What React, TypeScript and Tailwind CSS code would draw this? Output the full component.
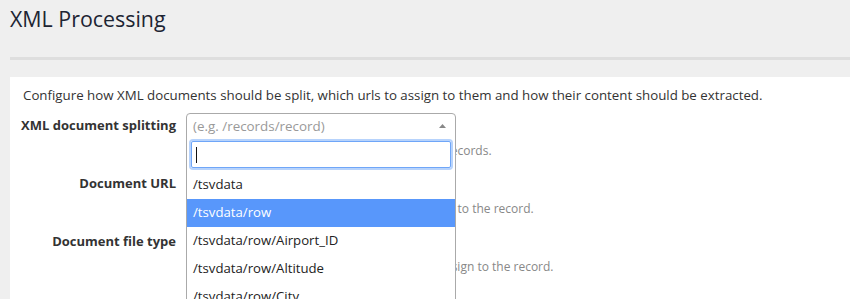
const options = [
  "/tsvdata",
  "/tsvdata/row",
  "/tsvdata/row/Airport_ID",
  "/tsvdata/row/Altitude",
  "/tsvdata/row/City",
  "/tsvdata/row/Country",
];

const rows = [
  {
    label: "Document URL",
    help: "Select the XML element holding the url to assign to the record.",
  },
  {
    label: "Document file type",
    help: "Choose the XML element with the file type to assign to the record.",
  },
];

const SplitSelect = () => {
  return (
    <div className="relative w-[270px]">
      <div className="flex h-[26px] items-center justify-between rounded-t-[4px] border border-[#aaa] bg-white pl-[6px] pr-[9px]">
        <span className="text-[13.4px] text-[#999]">(e.g. /records/record)</span>
        <svg width="7" height="4" viewBox="0 0 7 4">
          <path d="M0 4 L3.5 0 L7 4 Z" fill="#888" />
        </svg>
      </div>
      {/* open dropdown */}
      <div className="absolute left-0 top-[25px] z-10 w-[270px] border-x border-[#aaa] bg-white">
        <div className="px-[4px] pb-[3px] pt-[3px]">
          <div className="flex h-[27px] items-center rounded-[2px] border border-[#6fa6f8] pl-[4px] shadow-[0_0_0_2px_#b7d3fc]">
            <span className="h-[16px] w-px bg-[#111]" />
          </div>
        </div>
        <ul>
          {options.map((o, i) => (
            <li
              key={o}
              className={`flex h-[28px] items-center pl-[6px] text-[13.2px] ${
                i === 1 ? "bg-[#5897fb] text-white" : "text-[#222]"
              }`}
            >
              {o}
            </li>
          ))}
        </ul>
      </div>
    </div>
  );
};

export default function App() {
  return (
    <div
      className="h-[299px] overflow-hidden bg-[#efefef]"
      style={{ fontFamily: '"Open Sans", "Liberation Sans", sans-serif' }}
    >
      <h1 className="px-[10px] pt-[2px] text-[21.4px] leading-[34px] text-[#1d2533]">
        XML Processing
      </h1>
      <div className="ml-[10px] mt-[21px] h-[3px] bg-[#dedede]" />
      <div className="ml-[10px] mt-[17px] bg-white pb-10 pt-[9px]">
        <p className="pl-[13px] text-[13.3px] leading-[18px] text-[#333]">
          Configure how XML documents should be split, which urls to assign to them and how their content should be extracted.
        </p>
        <div className="mt-[9px] grid grid-cols-[166px_1fr] gap-x-[10px]">
          <label className="flex h-[26px] items-center justify-end text-[13px] font-bold text-[#333]">
            XML document splitting
          </label>
          <div>
            <SplitSelect />
            <p className="mt-[3px] text-[12px] leading-[17px] text-[#888]">
              Select the XML element which marks separate records.
            </p>
          </div>
          {rows.map((r) => (
            <div key={r.label} className="contents">
              <label className="mt-[12px] flex h-[26px] items-center justify-end text-[13px] font-bold text-[#333]">
                {r.label}
              </label>
              <div className="mt-[12px]">
                <input
                  type="text"
                  className="h-[26px] w-[270px] rounded-[4px] border border-[#ccc] px-2 text-[13px]"
                />
                <p className="mt-[3px] text-[12px] leading-[17px] text-[#888]">{r.help}</p>
              </div>
            </div>
          ))}
        </div>
      </div>
    </div>
  );
}
